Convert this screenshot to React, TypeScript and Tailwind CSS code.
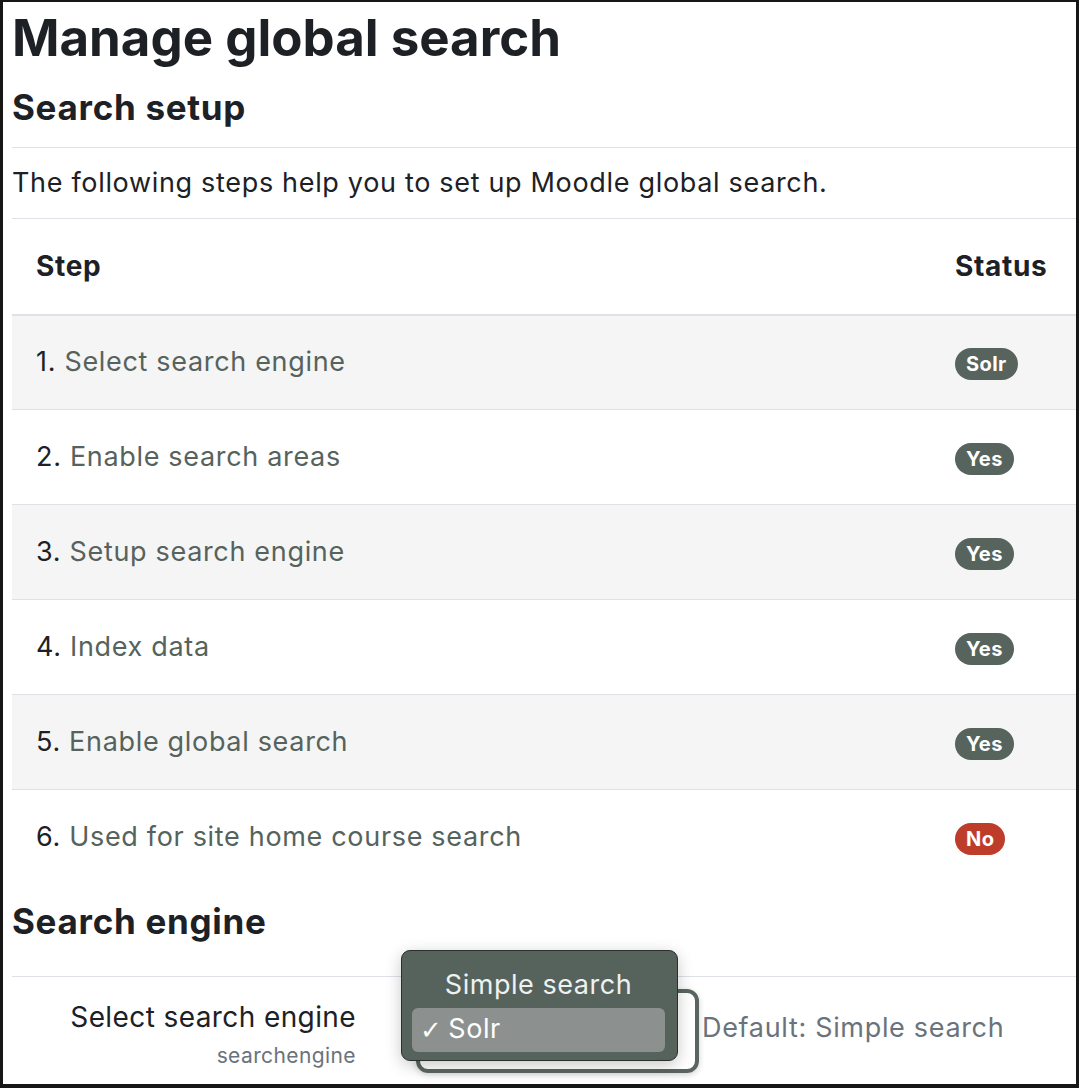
type Step = { n: number; label: string; status: string; tone: 'ok' | 'bad' }

const steps: Step[] = [
  { n: 1, label: 'Select search engine', status: 'Solr', tone: 'ok' },
  { n: 2, label: 'Enable search areas', status: 'Yes', tone: 'ok' },
  { n: 3, label: 'Setup search engine', status: 'Yes', tone: 'ok' },
  { n: 4, label: 'Index data', status: 'Yes', tone: 'ok' },
  { n: 5, label: 'Enable global search', status: 'Yes', tone: 'ok' },
  { n: 6, label: 'Used for site home course search', status: 'No', tone: 'bad' },
]

function Badge({ text, tone }: { text: string; tone: 'ok' | 'bad' }) {
  return (
    <span
      className={
        tone === 'ok'
          ? 'inline-flex h-[32px] items-center rounded-full bg-[#56645d] px-[11px] text-[20px] font-bold leading-none tracking-[0.02em] text-white'
          : 'inline-flex h-[32px] items-center rounded-full bg-[#bd3d2a] px-[11px] text-[20px] font-bold leading-none tracking-[0.02em] text-white'
      }
    >
      {text}
    </span>
  )
}

export default function App() {
  return (
    <div className="h-[1088px] w-[1079px] overflow-hidden bg-[#161616] pb-[4px] pl-[3px] pr-[3px] pt-[2px] font-['Inter',sans-serif] text-[#1d2125]">
      <div className="h-full overflow-hidden bg-white pl-[9px]">
        <h1 className="pt-[6px] text-[51px] font-bold leading-[60px]">Manage global search</h1>
        <h2 className="mt-[19px] text-[35px] font-bold leading-[40px] tracking-[0.02em]">Search setup</h2>
        <div className="mt-[20px] border-t border-[#dee2e6]" />
        <p className="py-[17px] text-[27px] leading-[36px] tracking-[0.025em]">
          The following steps help you to set up Moodle global search.
        </p>
        <table className="w-full border-collapse border-t border-[#dee2e6] text-[27px] tracking-[0.025em]">
          <thead>
            <tr className="h-[96px] border-b-2 border-[#dee2e6] text-[28px]">
              <th className="px-[24px] text-left font-bold">Step</th>
              <th className="w-[140px] pl-[19px] pr-[20px] text-left font-bold">Status</th>
            </tr>
          </thead>
          <tbody>
            {steps.map((s, i) => (
              <tr
                key={s.n}
                className={
                  i % 2 === 0
                    ? 'h-[95px] border-b border-[#dee2e6] bg-[#f5f5f5]'
                    : 'h-[95px] border-b border-[#dee2e6] bg-white last:border-b-0'
                }
              >
                <td className="px-[24px]">
                  {s.n}. <span className="text-[#56635d]">{s.label}</span>
                </td>
                <td className="pl-[19px] pr-[20px]">
                  <Badge text={s.status} tone={s.tone} />
                </td>
              </tr>
            ))}
          </tbody>
        </table>
        <h2 className="mt-[16px] text-[35px] font-bold leading-[40px] tracking-[0.02em]">Search engine</h2>
        <div className="mt-[35px] border-t border-[#dee2e6]" />
        <div className="flex pt-[22px]">
          <div className="flex w-[344px] flex-col items-end tracking-[0.025em]">
            <span className="text-[28px] leading-[36px]">Select search engine</span>
            <span className="mt-[10px] text-[21px] leading-[22px] text-[#6a737b]">searchengine</span>
          </div>
          <div className="relative ml-[59px] w-[300px]">
            <div className="absolute left-[1px] top-[-10px] h-[84px] w-[283px] rounded-[12px] border-[4px] border-[#59665f] shadow-[0_2px_6px_rgba(0,0,0,0.18)]" />
            <div className="absolute left-[-14px] top-[-49px] h-[111px] w-[277px] rounded-[9px] border border-[#2a302d] bg-[#55635c] pl-[10px] pr-[12px] shadow-[0_4px_16px_rgba(0,0,0,0.22)]">
              <div className="pt-[17px] text-center text-[27px] leading-[34px] tracking-[0.02em] text-[#eef1ef]">
                Simple search
              </div>
              <div className="mt-[6px] flex h-[44px] items-center gap-[6px] rounded-[6px] bg-[#8c9190] pl-[8px] text-[27px] tracking-[0.02em] text-white">
                <span className="font-['DejaVu_Sans',sans-serif] text-[26px] leading-none">✓</span>
                Solr
              </div>
            </div>
            <span className="absolute left-[287px] top-[11px] whitespace-nowrap text-[27px] leading-[36px] tracking-[0.025em] text-[#6a737b]">
              Default: Simple search
            </span>
          </div>
        </div>
      </div>
    </div>
  )
}
